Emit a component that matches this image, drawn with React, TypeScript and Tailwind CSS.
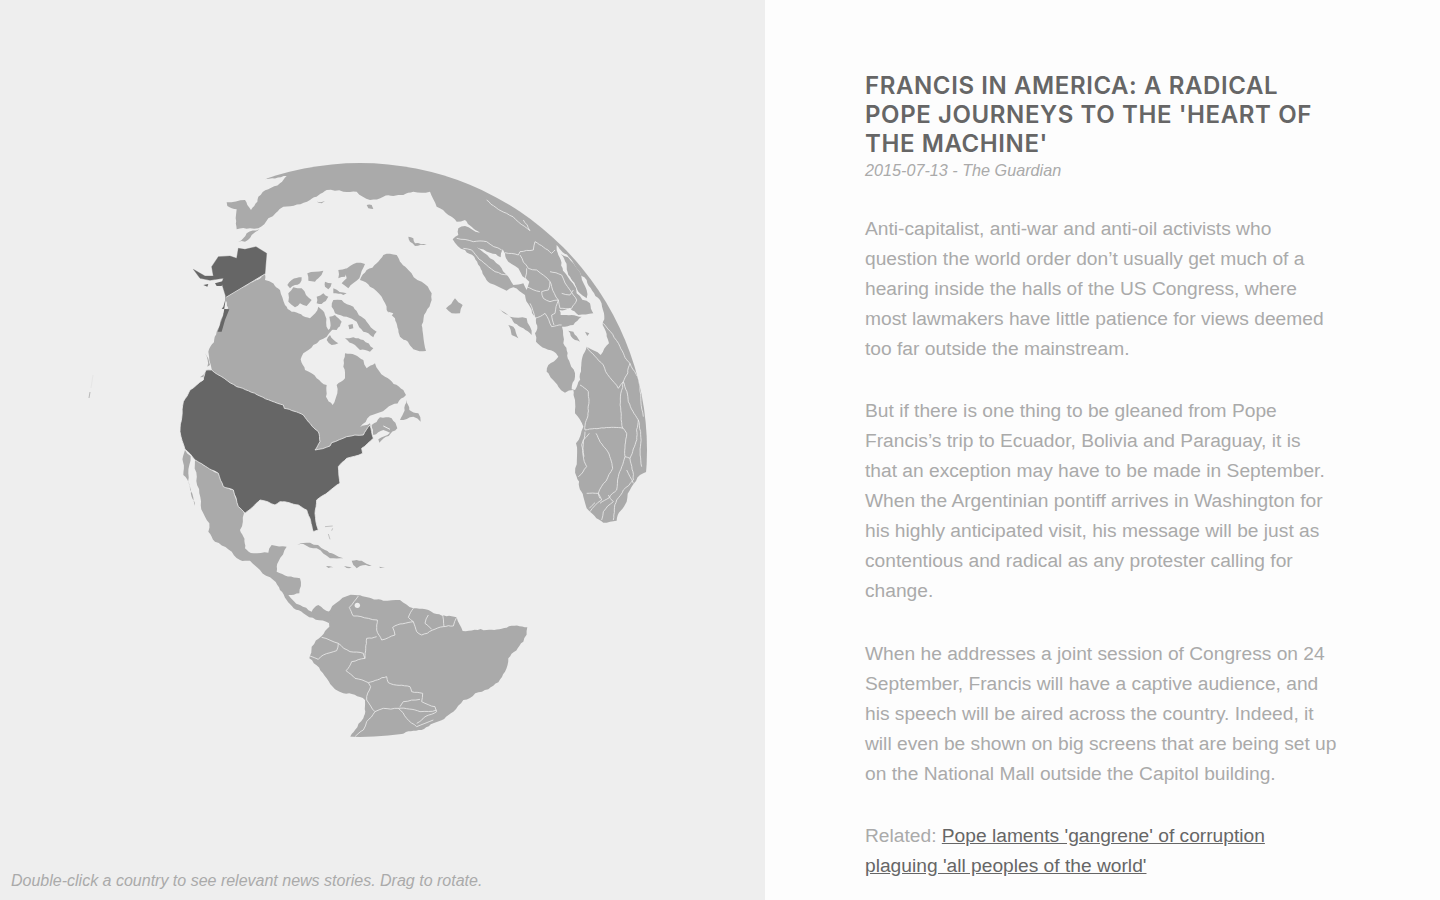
const LAND = '#aaaaaa';
const DARK = '#666666';
const SEA = '#eeeeee';

function toPoints(d: string) {
  const nums = d.match(/-?\d+(\.\d+)?/g) || [];
  const pts: number[][] = [];
  for (let i = 0; i + 1 < nums.length; i += 2) pts.push([Number(nums[i]), Number(nums[i + 1])]);
  return pts;
}

function wobble(x: number, y: number) {
  const s = Math.sin(x * 12.9898 + y * 78.233) * 43758.5453;
  return s - Math.floor(s) - 0.5;
}

// breaks long straight edges up so a coast gets some texture
function roughen(a: number[], b: number[], out: number[][], amount: number) {
  const dx = b[0] - a[0];
  const dy = b[1] - a[1];
  const len = Math.hypot(dx, dy);
  if (len < 14) {
    out.push(b);
    return;
  }
  const off = wobble(a[0] + b[0], a[1] + b[1]) * len * amount;
  const mid = [(a[0] + b[0]) / 2 - (dy / len) * off, (a[1] + b[1]) / 2 + (dx / len) * off];
  roughen(a, mid, out, amount);
  roughen(mid, b, out, amount);
}

function coast(d: string, amount = 0.22) {
  const pts = toPoints(d);
  if (pts.length < 3) return d;
  const out: number[][] = [];
  pts.forEach((p, i) => roughen(p, pts[(i + 1) % pts.length], out, amount));
  return 'M' + out.map((p) => `${p[0].toFixed(1)},${p[1].toFixed(1)}`).join(' L') + ' Z';
}

function border(d: string) {
  const pts = toPoints(d);
  const out: number[][] = [pts[0]];
  for (let i = 0; i + 1 < pts.length; i++) roughen(pts[i], pts[i + 1], out, 0.14);
  return 'M' + out.map((p) => `${p[0].toFixed(1)},${p[1].toFixed(1)}`).join(' L');
}

// every group below is traced at 3x, hence the scale(1/3)
// the top edge runs past the globe's rim on purpose, the clip circle cuts it clean
const eurasia =
  'M-610,7 L-555,0 L-548,15 L-537,30 L-518,5 L-515,-10 L-485,-32 L-450,-50 L-430,-72 L-500,-58 L-430,-100 L-360,-125 L-290,-135 L-210,-140 L-140,-135 L-70,-125 L0,-110 L100,-70 L205,-20 L275,20 L340,55 L405,115 L465,175 L505,230 L545,295 L590,365 L620,440 L645,535 L662,615 L672,710 L672,790 L650,815 L630,825 L605,860 L590,905 L560,962 L520,968 L470,925 L460,890 L440,830 L438,730 L460,680 L435,640 L435,600 L430,570 L405,578 L385,560 L350,515 L355,495 L385,470 L378,460 L318,425 L315,400 L322,385 L318,355 L300,320 L285,285 L250,262 L230,272 L180,250 L150,200 L105,150 L68,118 L85,105 L85,85 L105,78 L125,88 L150,98 L105,60 L80,65 L55,45 L20,20 L0,-25 L-50,-25 L-80,-15 L-140,-10 L-180,0 L-220,-25 L-260,-25 L-310,-30 L-360,0 L-440,20 L-485,55 L-515,85 L-540,85 L-580,88 L-583,55 L-580,28 L-608,18 Z';

const eurasiaSeas = [
  'M140,142 L180,158 L212,172 L218,148 L228,175 L265,205 L298,245 L290,270 L280,250 L250,255 L238,235 L215,205 L180,175 Z',
  'M380,135 L420,175 L470,240 L510,300 L522,340 L518,375 L537,430 L512,465 L470,440 L435,570 L425,568 L435,530 L420,490 L400,430 L396,380 L430,375 L455,350 L425,345 L392,345 L388,330 L420,325 L445,345 L490,340 L480,310 L440,280 L410,225 L385,165 Z',
];

const eurasiaIslands = [
  'M392,162 L430,190 L470,270 L470,295 L445,275 L415,225 Z',
  'M415,392 L430,395 L450,425 L435,420 Z',
  'M465,395 L478,400 L472,408 Z',
  'M205,325 L240,350 L290,355 L305,405 L280,385 L235,345 Z',
  'M235,375 L250,380 L265,415 L245,405 Z',
  'M-575,125 L-550,100 L-512,88 L-535,105 L-555,125 Z',
  'M-190,15 L-175,15 L-170,27 L-185,25 Z',
  'M-65,110 L-50,115 L-45,130 L-10,135 L-45,138 L-60,125 Z',
  'M-340,5 L-315,3 L-325,10 Z',
];

const eurasiaBorders = [
  'M80,115 L130,125 L170,125 L215,150',
  'M100,145 L125,150 L175,200 L195,215 L235,225',
  'M170,0 L230,40 L300,92 L280,60',
  'M225,158 L265,165 L270,155 L310,150 L315,125 L365,160 L375,150',
  'M270,165 L295,205 L320,210 L360,245 L355,270 L335,275 L340,295 L360,305 L385,300',
  'M290,205 L290,260 L330,275',
  'M300,310 L315,355 L345,340 L365,380 L395,375',
  'M360,215 L395,225 L420,270 L440,300 L425,325 L390,325 L385,300 L365,260 L360,245',
  'M395,280 L420,285 L430,270',
  'M385,300 L375,340 L365,345 L372,375',
  'M470,440 L520,495 L565,565 L580,545 L600,490',
  'M520,370 L570,440 L600,490 L630,560 L640,650',
  'M450,555 L475,575 L465,690 L580,685 L590,700 L585,770 L600,775 L625,660 L580,545 L578,685',
  'M498,700 L548,805 L505,880 L510,895',
  'M465,695 L455,735 L470,800 L445,830',
  'M478,700 L460,720 L462,770',
  'M585,770 L565,830 L560,870 L510,910',
  'M600,775 L610,840 L580,870 L560,900 L550,960',
  'M470,880 L505,880 L515,900 L480,935',
  'M478,925 L495,908',
  'M535,885 L550,905 L520,935 L515,960',
  'M590,810 L610,850',
  'M625,660 L635,800',
];

const canadaIslands = [
  'M262,105 L275,90 L305,82 L300,100 L285,105 L270,115 Z',
  'M265,130 L280,112 L305,115 L318,135 L335,150 L320,168 L300,160 L285,172 L265,155 Z',
  'M322,70 L345,65 L370,62 L355,85 L345,95 L325,92 Z',
  'M350,140 L370,130 L385,140 L365,162 L350,160 Z',
  'M415,60 L440,55 L435,80 L415,85 Z',
  'M435,60 L470,38 L495,42 L478,85 L445,115 L425,100 L440,85 Z',
  'M375,95 L395,100 L385,118 L375,110 Z',
  'M400,115 L440,130 L430,135 L400,130 Z',
  'M395,170 L400,150 L425,150 L460,170 L500,215 L530,245 L520,262 L505,250 L490,245 L470,215 L440,200 L405,190 Z',
  'M435,265 L460,262 L490,270 L520,295 L510,305 L480,300 L465,285 Z',
  'M388,200 L405,195 L425,215 L410,240 L390,235 Z',
  'M380,270 L390,255 L415,280 L395,285 Z',
  'M445,225 L458,222 L460,235 L448,238 Z',
  'M600,510 L620,450 L628,480 L655,490 L662,515 L640,500 Z',
  'M738,175 L765,145 L788,165 L780,190 L755,190 Z',
  'M15,310 L30,345 L22,350 Z',
  'M0,382 L20,360 L18,378 Z',
];

const canada =
  'M195,72 L195,90 L240,120 L255,165 L275,185 L330,205 L355,170 L375,195 L385,240 L415,225 L380,260 L340,285 L310,310 L302,328 L315,360 L350,385 L380,405 L378,440 L398,465 L412,430 L410,405 L435,385 L430,350 L435,310 L465,315 L490,330 L500,355 L525,340 L555,380 L610,420 L618,435 L560,475 L510,497 L480,532 L510,520 L515,545 L490,560 L440,570 L395,590 L350,610 L200,600 L35,358 L25,305 L50,245 L85,175 L75,140 Z';

const greenland =
  'M480,90 L500,60 L530,40 L550,15 L590,15 L625,60 L665,95 L695,130 L695,150 L665,225 L670,260 L678,303 L640,298 L600,260 L585,205 L560,180 L545,140 L510,110 Z';

const usa =
  'M125,30 L200,80 L340,135 L343,145 L400,165 L445,215 L450,245 L435,270 L480,258 L485,248 L530,230 L580,225 L600,195 L610,235 L575,265 L578,280 L530,295 L505,320 L510,370 L440,420 L435,460 L445,510 L430,515 L410,450 L385,435 L330,425 L315,435 L270,420 L225,460 L205,440 L190,390 L160,380 L145,340 L125,330 L75,300 L45,268 L30,215 L40,125 L60,90 L100,60 L108,30 Z';

const mexico =
  'M75,300 L125,330 L145,340 L160,380 L190,390 L222,460 L210,510 L225,565 L250,580 L295,578 L305,555 L350,560 L325,605 L320,635 L390,655 L388,700 L355,705 L390,735 L425,755 L445,735 L478,755 L478,790 L400,760 L350,720 L310,660 L270,630 L240,602 L210,600 L135,545 L115,515 L118,490 L88,400 Z';

const baja = 'M45,270 L62,288 L55,340 L75,437 L65,410 L40,345 Z';

const caribbean = [
  'M382,555 L420,548 L465,570 L520,595 L480,595 L440,565 L400,552 Z',
  'M545,602 L575,602 L605,618 L570,618 L560,625 L550,615 Z',
  'M468,618 L490,622 L475,624 Z',
  'M522,618 L545,622 L530,624 Z',
  'M628,620 L645,622 L630,624 Z',
];

const southAmerica =
  'M330,625 L345,600 L370,565 L375,510 L310,490 L285,478 L260,445 L208,385 L215,350 L245,318 L268,290 L262,250 L298,212 L345,195 L375,200 L430,212 L480,210 L520,235 L590,252 L650,262 L668,303 L740,300 L800,293 L862,292 L850,335 L805,385 L795,425 L745,478 L670,510 L640,545 L580,580 L520,602 L470,630 L420,640 Z';

const southAmericaBorders = [
  'M355,198 L328,232 L340,258 L385,265 L412,270 L410,300 L425,330 L465,315 L458,292 L520,275 L505,262 L520,235',
  'M520,275 L530,305 L545,315 L610,290 L640,288 L650,262',
  'M565,255 L555,280 L575,298',
  'M605,250 L612,290',
  'M410,320 L380,325 L375,385 L335,395 L318,422 L345,445 L385,458 L440,440 L445,458 L510,470 L515,485 L548,490 L545,515 L585,530 L590,545 L530,580',
  'M245,322 L295,340 L330,365 L370,370 L375,385',
  'M295,340 L290,362 L250,375 L235,388 L210,378',
  'M385,458 L392,470 L380,510 L405,545 L380,575 L370,600 L345,620',
  'M405,545 L430,535 L475,535 L540,545 L590,540',
  'M480,530 L490,515 L540,508',
  'M475,535 L530,590 L580,570',
];

const centralBorders = [
  'M62,112 L80,88 L112,90 L95,128',
  'M80,88 L72,105 L102,110',
  'M90,140 L125,155 L180,145',
  'M120,150 L130,165',
  'M150,195 L175,210',
];

function Poly({ d, fill }: { d: string; fill: string }) {
  return <path d={coast(d)} fill={fill} strokeLinejoin="round" />;
}

function Lines({ list }: { list: string[] }) {
  return (
    <g fill="none" stroke={SEA} strokeWidth={2.4} strokeLinejoin="round">
      {list.map((d) => (
        <path key={d} d={border(d)} />
      ))}
    </g>
  );
}

function Globe() {
  return (
    <svg viewBox="0 0 765 869" className="block w-[765px] h-[869px] shrink-0">
      <defs>
        <clipPath id="rim">
          <circle cx={360} cy={450} r={287} />
        </clipPath>
      </defs>

      <g clipPath="url(#rim)">
        {/* Eurasia and Africa */}
        <g transform="translate(430 200) scale(0.33333)">
          <Poly d={eurasia} fill={LAND} />
          {eurasiaSeas.map((d) => (
            <Poly key={d} d={d} fill={SEA} />
          ))}
          {eurasiaIslands.map((d) => (
            <Poly key={d} d={d} fill={LAND} />
          ))}
          <Lines list={eurasiaBorders} />
          <path d="M-80,28 L-40,38 L0,40" fill="none" stroke={SEA} strokeWidth={3} />
        </g>

        {/* South and Central America */}
        <g transform="translate(240 530) scale(0.33333)">
          <Poly d={southAmerica} fill={LAND} />
          <Lines list={southAmericaBorders} />
          <Lines list={centralBorders} />
          <circle cx={352} cy={226} r={8} fill={SEA} />
        </g>
      </g>

      {/* Canada and Greenland */}
      <g transform="translate(200 250) scale(0.33333)">
        <Poly d={canada} fill={LAND} />
        <Poly d={greenland} fill={LAND} />
        {canadaIslands.map((d) => (
          <Poly key={d} d={d} fill={LAND} />
        ))}
        <path d="M565,185 L580,190 L575,197 L565,193 Z" fill={SEA} />
      </g>

      {/* USA, Mexico and the Caribbean */}
      <g transform="translate(170 360) scale(0.33333)">
        <Poly d={mexico} fill={LAND} />
        <Poly d={baja} fill={LAND} />
        {caribbean.map((d) => (
          <Poly key={d} d={d} fill={LAND} />
        ))}
        <Poly d="M605,195 L630,172 L665,175 L682,205 L628,248 L625,238 L660,218 L640,210 L610,225 Z" fill={LAND} />
        <path d="M640,198 L660,208" fill="none" stroke={SEA} strokeWidth={3} />
        <path d={coast(usa, 0.1)} fill={DARK} stroke={SEA} strokeWidth={2.4} strokeLinejoin="round" />
        <path d="M510,318 L525,314 L515,335 Z" fill={SEA} />
        <path d="M465,500 L488,498 M485,512 L488,505 M475,522 L480,538" fill="none" stroke={LAND} strokeWidth={2} />
      </g>

      {/* Alaska */}
      <g transform="translate(170 150) scale(0.33333)">
        <path
          d="M285,372 L290,310 L258,290 L225,298 L205,295 L200,325 L180,318 L145,320 L125,350 L130,378 L105,378 L70,358 L90,385 L120,391 L160,385 L155,400 L168,442 Z"
          fill={DARK}
          stroke={DARK}
          strokeWidth={1}
        />
        <path d="M168,442 L160,470 L155,476 L178,478 L165,510 L155,545 L143,545 L155,510 L160,495 Z" fill={DARK} />
        <path d="M168,442 L285,372" fill="none" stroke={SEA} strokeWidth={2.4} />
        <path d="M100,405 L115,402 L112,410 Z M135,400 L160,393 L155,408 L140,408 Z" fill={DARK} />
      </g>

      {/* far side of the globe, barely visible */}
      <path d="M93,375 L91,388" fill="none" stroke="#e6e6e6" strokeWidth={1} />
      <path d="M90,392 L89,398" fill="none" stroke="#b8b8b8" strokeWidth={1} />
    </svg>
  );
}

export default function App() {
  return (
    <div className="flex h-screen overflow-hidden font-['Liberation_Sans',Arial,sans-serif]">
      <div className="w-[765px] shrink-0 bg-[#eeeeee] flex flex-col">
        <Globe />
        <p className="px-[11px] text-[16px] leading-[24px] italic text-[#aaaaaa]">
          Double-click a country to see relevant news stories. Drag to rotate.
        </p>
      </div>

      <div className="flex-1 bg-[#fdfdfd] pl-[100px] pt-[71px]">
        <div className="w-[472.5px]">
          <h1 className="font-['Inter',sans-serif] text-[24px] leading-[29px] font-semibold tracking-[0.6px] text-[#666666] uppercase">
            Francis in America: a radical pope journeys to the 'heart of the machine'
          </h1>
          <p className="text-[16.2px] leading-[24px] italic text-[#aaaaaa]">2015-07-13 - The Guardian</p>

          <div className="mt-[32px] text-[19.2px] leading-[30px] text-[#aaaaaa]">
            <p className="mb-[32.4px]">
              Anti-capitalist, anti-war and anti-oil activists who question the world order don’t usually get much of a
              hearing inside the halls of the US Congress, where most lawmakers have little patience for views deemed too
              far outside the mainstream.
            </p>
            <p className="mb-[32.4px]">
              But if there is one thing to be gleaned from Pope Francis’s trip to Ecuador, Bolivia and Paraguay, it is
              that an exception may have to be made in September. When the Argentinian pontiff arrives in Washington for
              his highly anticipated visit, his message will be just as contentious and radical as any protester calling
              for change.
            </p>
            <p className="mb-[32.4px]">
              When he addresses a joint session of Congress on 24 September, Francis will have a captive audience, and
              his speech will be aired across the country. Indeed, it will even be shown on big screens that are being
              set up on the National Mall outside the Capitol building.
            </p>
            <p>
              Related:{' '}
              <a href="#" className="text-[#666666] underline">
                Pope laments 'gangrene' of corruption plaguing 'all peoples of the world'
              </a>
            </p>
          </div>
        </div>
      </div>
    </div>
  );
}
